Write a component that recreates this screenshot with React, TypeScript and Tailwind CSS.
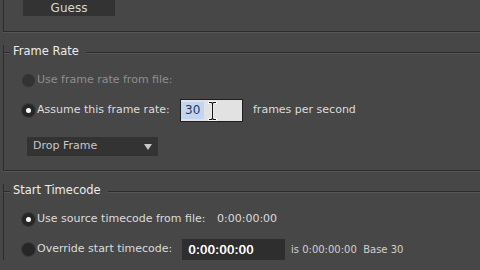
import React from "react"

const line = "bg-[#2c2c2c] shadow-[0_1px_0_#565656]"

function Radio({ checked, disabled }: { checked?: boolean; disabled?: boolean }) {
  return (
    <span
      className={
        "flex h-[13px] w-[13px] shrink-0 items-center justify-center rounded-full " +
        (disabled ? "bg-[#333333]" : "bg-[#262626] shadow-[0_0_0_1px_#3a3a3a]")
      }
    >
      {checked && <span className="h-[5px] w-[5px] rounded-full bg-white" />}
    </span>
  )
}

function SectionHeader({ title }: { title: string }) {
  return (
    <div className="-mt-[7px] flex h-[14px] items-center">
      <span className={"h-px w-[6px] " + line} />
      <span className="px-[3px] text-[11.5px] text-[#ececec]">{title}</span>
      <span className={"ml-[4px] h-px flex-1 " + line} />
    </div>
  )
}

function IBeam() {
  return (
    <svg width="9" height="20" viewBox="0 0 9 20" className="absolute left-[27px] top-[1px]">
      <path
        d="M1 1.5h2.5l1 1 1-1H8M4.5 2.5v15M1 18.5h2.5l1-1 1 1H8"
        fill="none"
        stroke="#fff"
        strokeWidth="2.6"
        strokeLinecap="round"
      />
      <path
        d="M1 1.5h2.5l1 1 1-1H8M4.5 2.5v15M1 18.5h2.5l1-1 1 1H8"
        fill="none"
        stroke="#111"
        strokeWidth="1.1"
      />
    </svg>
  )
}

export default function App() {
  return (
    <div className="h-[270px] w-[480px] overflow-hidden bg-[#474747] font-['DejaVu_Sans',sans-serif] text-[11px] text-[#dcdcdc]">
      {/* top group (cut off) */}
      <div className="ml-[3px] h-[32px] border-b border-l border-[#2c2c2c] pl-[19px] shadow-[0_1px_0_#565656]">
        <div className="flex h-[16px] w-[92px] items-center justify-center bg-[#333333] text-[12px] text-[#d8d8d8]">
          Guess
        </div>
      </div>

      {/* Frame Rate */}
      <div className="ml-[3px] mt-[20px] border-b border-l border-[#2c2c2c] pb-[14px] shadow-[0_1px_0_#565656]">
        <SectionHeader title="Frame Rate" />
        <div className="pl-[18px]">
          <div className="mt-[14px] flex h-[14px] items-center gap-[2px]">
            <Radio disabled />
            <span className="text-[#8e8e8e]">Use frame rate from file:</span>
          </div>
          <div className="mt-[12px] flex h-[23px] items-center gap-[2px]">
            <Radio checked />
            <span className="w-[141px]">Assume this frame rate:</span>
            <div className="relative flex h-[23px] w-[63px] items-center border border-[#1e1e1e] bg-[#e2e2e2]">
              <span className="bg-[#c3d6ef] px-[4px] leading-[17px] text-[12px] text-[#1c3766]">30</span>
              <IBeam />
            </div>
            <span className="ml-[8px]">frames per second</span>
          </div>
          <div className="ml-[5px] mt-[15px] flex h-[19px] w-[131px] items-center justify-between bg-[#333333] pl-[6px] pr-[6px] text-[#c8c8c8]">
            <span>Drop Frame</span>
            <svg width="8" height="6" viewBox="0 0 8 6">
              <path d="M0 0h8L4 6z" fill="#c8c8c8" />
            </svg>
          </div>
        </div>
      </div>

      {/* Start Timecode */}
      <div className="ml-[3px] mt-[20px] border-l border-[#2c2c2c]">
        <SectionHeader title="Start Timecode" />
        <div className="pl-[18px]">
          <div className="mt-[14px] flex h-[14px] items-center gap-[2px]">
            <Radio checked />
            <span className="w-[178px]">Use source timecode from file:</span>
            <span>0:00:00:00</span>
          </div>
          <div className="mt-[13px] flex h-[21px] items-center gap-[2px]">
            <Radio />
            <span className="w-[143px]">Override start timecode:</span>
            <div className="flex h-[21px] w-[103px] items-center bg-[#2e2e2e] pl-[6px] text-[12px] text-white [text-shadow:0.4px_0_0_#fff]">
              0:00:00:00
            </div>
            <span className="ml-[4px] text-[10px] text-[#d0d0d0]">
              is 0:00:00:00&nbsp;&nbsp;Base 30
            </span>
          </div>
        </div>
      </div>
    </div>
  )
}
